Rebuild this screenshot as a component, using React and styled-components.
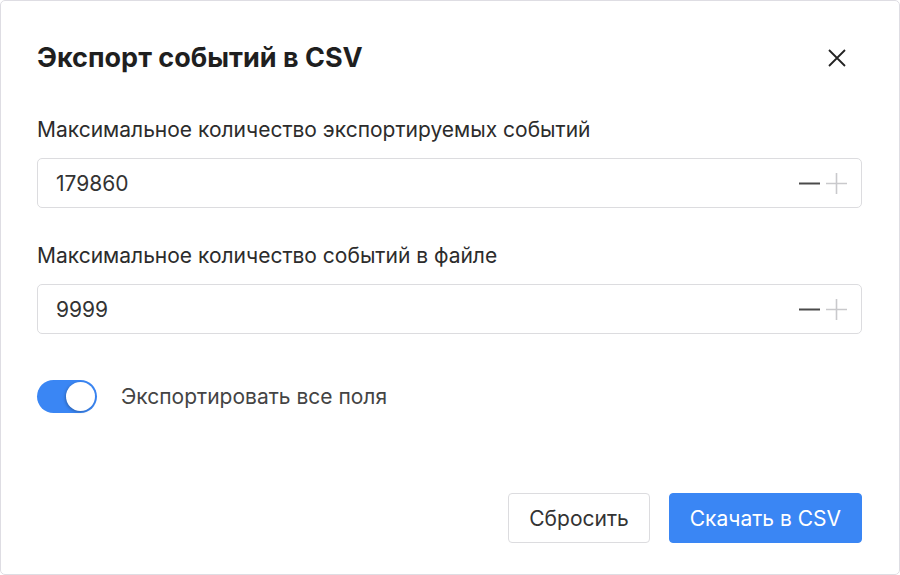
import React, { useState } from 'react'
import styled, { createGlobalStyle } from 'styled-components'

const GlobalStyle = createGlobalStyle`
  html, body {
    margin: 0;
    padding: 0;
    background: #ffffff;
  }
  body {
    font-family: Inter, 'Noto Sans', 'Liberation Sans', sans-serif;
    -webkit-font-smoothing: antialiased;
  }
  * {
    box-sizing: border-box;
  }
`

const Dialog = styled.div`
  width: 900px;
  height: 575px;
  border: 1px solid #dedde3;
  border-radius: 5px;
  background: #fff;
  padding: 41px 37px 31px 36px;
  display: flex;
  flex-direction: column;
`

const Header = styled.div`
  display: flex;
  align-items: center;
  justify-content: space-between;
  height: 32px;
`

const Title = styled.h2`
  margin: 0;
  font-size: 27px;
  line-height: 32px;
  font-weight: 700;
  color: #1f1f1f;
`

const CloseButton = styled.button`
  width: 24px;
  height: 24px;
  margin-right: 13px;
  padding: 0;
  border: none;
  background: none;
  display: flex;
  align-items: center;
  justify-content: center;
  cursor: pointer;
  color: #222;
`

const Field = styled.div`
  display: flex;
  flex-direction: column;
  gap: 16px;
  margin-top: ${p => p.top}px;
`

const Label = styled.label`
  font-size: 21px;
  line-height: 24px;
  color: #2c2c2c;
`

const InputBox = styled.div`
  height: 50px;
  border: 1px solid #dcdcdf;
  border-radius: 5px;
  display: flex;
  align-items: center;
  padding: 0 14px 0 18px;
`

const NumberInput = styled.input`
  flex: 1;
  border: none;
  outline: none;
  font-family: inherit;
  font-size: 21px;
  color: #333;
  background: transparent;
  padding: 0;
`

const Stepper = styled.div`
  display: flex;
  align-items: center;
  gap: 6px;
`

const StepButton = styled.button`
  width: 21px;
  height: 21px;
  padding: 0;
  border: none;
  background: none;
  display: flex;
  align-items: center;
  justify-content: center;
  color: ${p => (p.muted ? '#c9c9cc' : '#4a4a4a')};
  cursor: pointer;
`

const ToggleRow = styled.div`
  display: flex;
  align-items: center;
  gap: 24px;
  margin-top: 46px;
`

const Track = styled.button`
  width: 60px;
  height: 33px;
  border-radius: 17px;
  border: none;
  background: ${p => (p.on ? '#3a86f4' : '#cfd2d8')};
  display: flex;
  align-items: center;
  justify-content: ${p => (p.on ? 'flex-end' : 'flex-start')};
  padding: 0 2px;
  cursor: pointer;
`

const Knob = styled.span`
  width: 29px;
  height: 29px;
  border-radius: 50%;
  background: #fff;
  box-shadow: -1px 1px 3px rgba(0, 0, 0, 0.25);
`

const ToggleText = styled.span`
  font-size: 21px;
  color: #444;
`

const Footer = styled.div`
  margin-top: auto;
  display: flex;
  justify-content: flex-end;
  gap: 19px;
`

const Button = styled.button`
  height: 50px;
  padding: 0 ${p => (p.primary ? 20 : 20)}px;
  border-radius: 4px;
  font-family: inherit;
  font-size: 21px;
  border: 1px solid ${p => (p.primary ? '#3a86f4' : '#dcdcdf')};
  background: ${p => (p.primary ? '#3a86f4' : '#fff')};
  color: ${p => (p.primary ? '#fff' : '#333')};
  cursor: pointer;
`

const CloseIcon = () => (
  <svg width="18" height="18" viewBox="0 0 18 18" fill="none">
    <path d="M1 1L17 17M17 1L1 17" stroke="currentColor" strokeWidth="1.8" />
  </svg>
)

const MinusIcon = () => (
  <svg width="21" height="21" viewBox="0 0 21 21" fill="none">
    <path d="M0 10.5H21" stroke="currentColor" strokeWidth="2" />
  </svg>
)

const PlusIcon = () => (
  <svg width="21" height="21" viewBox="0 0 21 21" fill="none">
    <path d="M0 10.5H21M10.5 0V21" stroke="currentColor" strokeWidth="1.6" />
  </svg>
)

const NumberField = ({ label, value, onChange, top }) => (
  <Field top={top}>
    <Label>{label}</Label>
    <InputBox>
      <NumberInput value={value} onChange={e => onChange(e.target.value)} />
      <Stepper>
        <StepButton onClick={() => onChange(String(Number(value) - 1))}>
          <MinusIcon />
        </StepButton>
        <StepButton muted onClick={() => onChange(String(Number(value) + 1))}>
          <PlusIcon />
        </StepButton>
      </Stepper>
    </InputBox>
  </Field>
)

const App = () => {
  const [total, setTotal] = useState('179860')
  const [perFile, setPerFile] = useState('9999')
  const [allFields, setAllFields] = useState(true)

  return (
    <>
      <GlobalStyle />
      <Dialog>
        <Header>
          <Title>Экспорт событий в CSV</Title>
          <CloseButton aria-label='Закрыть'>
            <CloseIcon />
          </CloseButton>
        </Header>
        <NumberField
          top={44}
          label='Максимальное количество экспортируемых событий'
          value={total}
          onChange={setTotal}
        />
        <NumberField
          top={36}
          label='Максимальное количество событий в файле'
          value={perFile}
          onChange={setPerFile}
        />
        <ToggleRow>
          <Track on={allFields} onClick={() => setAllFields(!allFields)}>
            <Knob />
          </Track>
          <ToggleText>Экспортировать все поля</ToggleText>
        </ToggleRow>
        <Footer>
          <Button>Сбросить</Button>
          <Button primary>Скачать в CSV</Button>
        </Footer>
      </Dialog>
    </>
  )
}

export default App
